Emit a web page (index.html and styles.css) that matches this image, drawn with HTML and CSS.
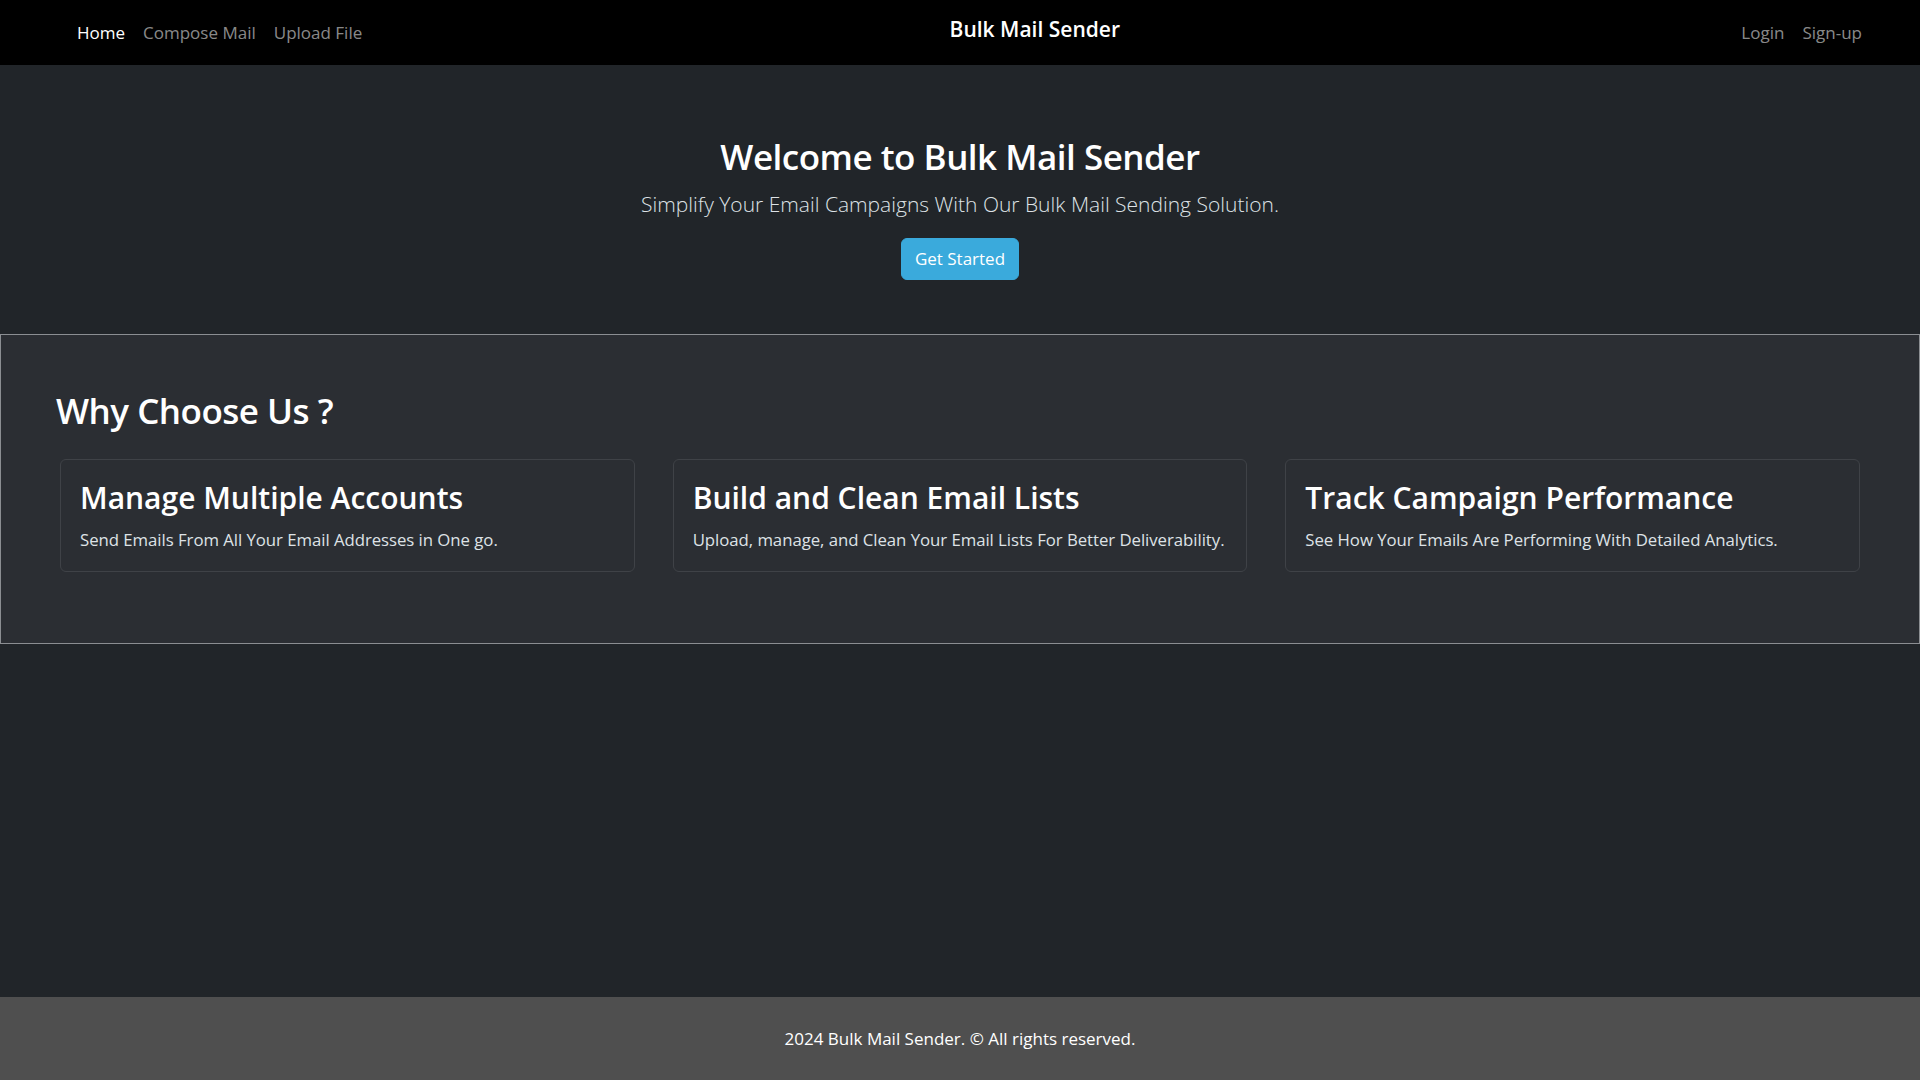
FILE: index.html
```html
<!DOCTYPE html>
<html lang="en">
<head>
<meta charset="utf-8">
<title>Bulk Mail Sender</title>
<link rel="stylesheet" href="styles.css">
</head>
<body>
<div class="page">
  <nav class="navbar">
    <ul class="nav">
      <li><a class="nav-link active" href="#">Home</a></li>
      <li><a class="nav-link" href="#">Compose Mail</a></li>
      <li><a class="nav-link" href="#">Upload File</a></li>
    </ul>
    <a class="brand" href="#">Bulk Mail Sender</a>
    <ul class="nav">
      <li><a class="nav-link" href="#">Login</a></li>
      <li><a class="nav-link" href="#">Sign-up</a></li>
    </ul>
  </nav>

  <main class="main">
    <section class="hero">
      <h1 class="hero-title">Welcome to Bulk Mail Sender</h1>
      <p class="lead">Simplify Your Email Campaigns With Our Bulk Mail Sending Solution.</p>
      <a class="btn" href="#">Get Started</a>
    </section>

    <section class="features">
      <h1 class="features-title">Why Choose Us ?</h1>
      <div class="cards">
        <div class="card">
          <h2 class="card-title">Manage Multiple Accounts</h2>
          <p class="card-text">Send Emails From All Your Email Addresses in One go.</p>
        </div>
        <div class="card">
          <h2 class="card-title">Build and Clean Email Lists</h2>
          <p class="card-text">Upload, manage, and Clean Your Email Lists For Better Deliverability.</p>
        </div>
        <div class="card">
          <h2 class="card-title">Track Campaign Performance</h2>
          <p class="card-text">See How Your Emails Are Performing With Detailed Analytics.</p>
        </div>
      </div>
    </section>
  </main>

  <footer class="footer">
    <p>2024 Bulk Mail Sender. &copy; All rights reserved.</p>
  </footer>
</div>
</body>
</html>
```

FILE: styles.css
```css
* { box-sizing: border-box; }

html, body {
  margin: 0;
  padding: 0;
}

body {
  background: #212529;
  color: #dee2e6;
  font-family: "Open Sans", "Noto Sans", "Liberation Sans", sans-serif;
  font-size: 16px;
  line-height: 1.5;
}

a { text-decoration: none; }

.page {
  min-height: 100vh;
  display: flex;
  flex-direction: column;
}

/* Navbar */
.navbar {
  height: 65px;
  background: #000;
  display: flex;
  align-items: center;
  padding: 0 49px 0 68px;
}

.nav {
  list-style: none;
  margin: 0;
  padding: 0;
  display: flex;
  padding-top: 1px;
}

.nav-link {
  display: block;
  padding: 0 9px;
  color: rgba(255, 255, 255, 0.55);
  font-size: 17px;
  line-height: 24px;
}

.nav-link.active { color: #fff; }

.brand {
  margin: 0 auto 7px;
  padding-right: 34px;
  color: #fff;
  font-size: 21px;
  font-weight: 600;
  line-height: 30px;
}

/* Hero */
.main { flex: 1; }

.hero {
  text-align: center;
  padding: 68px 0 54px;
}

.hero-title {
  margin: 0 0 8px;
  color: #fff;
  font-size: 35px;
  font-weight: 600;
  letter-spacing: -0.5px;
  line-height: 48px;
}

.lead {
  margin: 0 0 19px;
  color: #dee2e6;
  font-size: 21px;
  font-weight: 300;
  line-height: 30px;
}

.btn {
  display: inline-block;
  padding: 7px 13px;
  border: 1px solid #3aaadc;
  border-radius: 6px;
  background: #3aaadc;
  color: #fff;
  font-size: 17px;
  line-height: 26px;
  font-weight: 400;
}

/* Features */
.features {
  background: #2b2e33;
  border: 1px solid #8b8e92;
  padding: 52px 59px 71px;
}

.features-title {
  margin: 0 0 24px -4px;
  color: #fff;
  font-size: 35px;
  font-weight: 600;
  letter-spacing: -0.5px;
  line-height: 48px;
}

.cards {
  display: grid;
  grid-template-columns: repeat(3, 1fr);
  gap: 38px;
}

.card {
  border: 1px solid #3f4247;
  border-radius: 6px;
  background: #2b2e33;
  padding: 19px 10px 19px 19px;
}

.card-title {
  margin: 0 0 10px;
  color: #fff;
  font-size: 30px;
  font-weight: 600;
  line-height: 38px;
}

.card-text {
  margin: 0;
  color: #dee2e6;
  font-size: 16.8px;
  letter-spacing: -0.05px;
  line-height: 25px;
}

/* Footer */
.footer {
  background: #4f4f4f;
  text-align: center;
  color: #fff;
  padding: 30px 0 29px;
}

.footer p {
  margin: 0;
  font-size: 17px;
  line-height: 24px;
}
```
